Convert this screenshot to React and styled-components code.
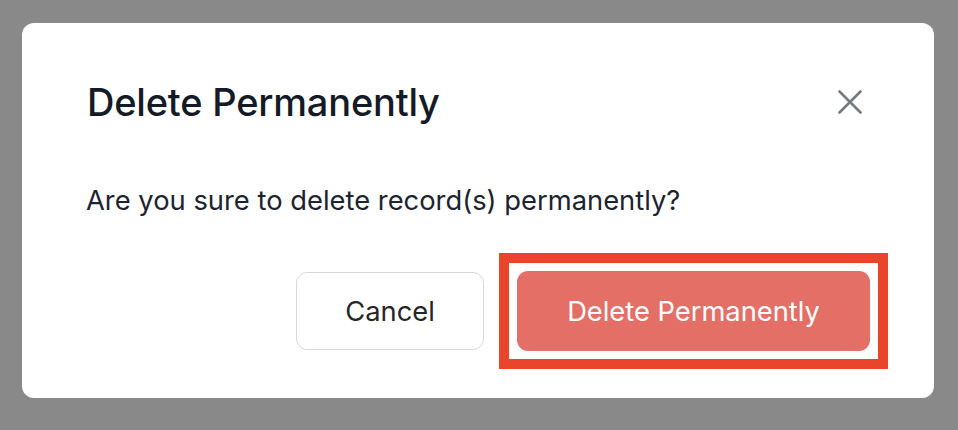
import React from "react";
import styled, { createGlobalStyle } from "styled-components";

const Global = createGlobalStyle`
  html, body { margin: 0; padding: 0; }
  body {
    background: #898989;
    font-family: Inter, "Noto Sans", "Liberation Sans", sans-serif;
    width: 958px;
    height: 430px;
    overflow: hidden;
  }
`;

const Backdrop = styled.div`
  width: 958px;
  height: 430px;
  box-sizing: border-box;
  padding: 23px 24px 0 22px;
`;

const Modal = styled.div`
  width: 912px;
  height: 375px;
  box-sizing: border-box;
  background: #ffffff;
  border-radius: 12px;
  padding: 55px 64px 0 65px;
  display: flex;
  flex-direction: column;
`;

const Header = styled.div`
  display: flex;
  align-items: center;
  justify-content: space-between;
  height: 48px;
`;

const Title = styled.h2`
  margin: 0;
  font-size: 38px;
  font-weight: 500;
  color: #141a26;
  letter-spacing: -0.2px;
  line-height: 48px;
`;

const CloseButton = styled.button`
  border: none;
  background: transparent;
  padding: 0;
  margin-right: 8px;
  width: 24px;
  height: 24px;
  display: flex;
  cursor: pointer;
`;

const Message = styled.p`
  margin: 57px 0 0 -1px;
  font-size: 27.35px;
  line-height: 36px;
  color: #1d2330;
`;

const Actions = styled.div`
  display: flex;
  justify-content: flex-end;
  align-items: center;
  gap: 33px;
  margin-top: 52px;
`;

const Button = styled.button`
  box-sizing: border-box;
  height: ${(p) => (p.$primary ? "80px" : "78px")};
  width: ${(p) => (p.$primary ? "353px" : "188px")};
  padding: 0;
  border-radius: 11px;
  font-family: inherit;
  font-size: 27.3px;
  font-weight: 400;
  border: ${(p) => (p.$primary ? "none" : "1.5px solid #d8d8d8")};
  background: ${(p) => (p.$primary ? "#e36f66" : "#ffffff")};
  color: ${(p) => (p.$primary ? "#ffffff" : "#262626")};
  position: relative;
  cursor: pointer;
`;

const Highlight = styled.span`
  position: absolute;
  inset: -18px;
  border: 10px solid #e8452b;
  pointer-events: none;
`;

function CloseIcon() {
  return (
    <svg width="24" height="24" viewBox="0 0 24 24" fill="none">
      <path
        d="M1.5 1.5L22.5 22.5M22.5 1.5L1.5 22.5"
        stroke="#767b82"
        strokeWidth="2.6"
        strokeLinecap="round"
      />
    </svg>
  );
}

export default function App() {
  return (
    <>
      <Global />
      <Backdrop>
        <Modal>
          <Header>
            <Title>Delete Permanently</Title>
            <CloseButton aria-label="Close">
              <CloseIcon />
            </CloseButton>
          </Header>
          <Message>Are you sure to delete record(s) permanently?</Message>
          <Actions>
            <Button>Cancel</Button>
            <Button $primary>
              Delete Permanently
              <Highlight />
            </Button>
          </Actions>
        </Modal>
      </Backdrop>
    </>
  );
}
